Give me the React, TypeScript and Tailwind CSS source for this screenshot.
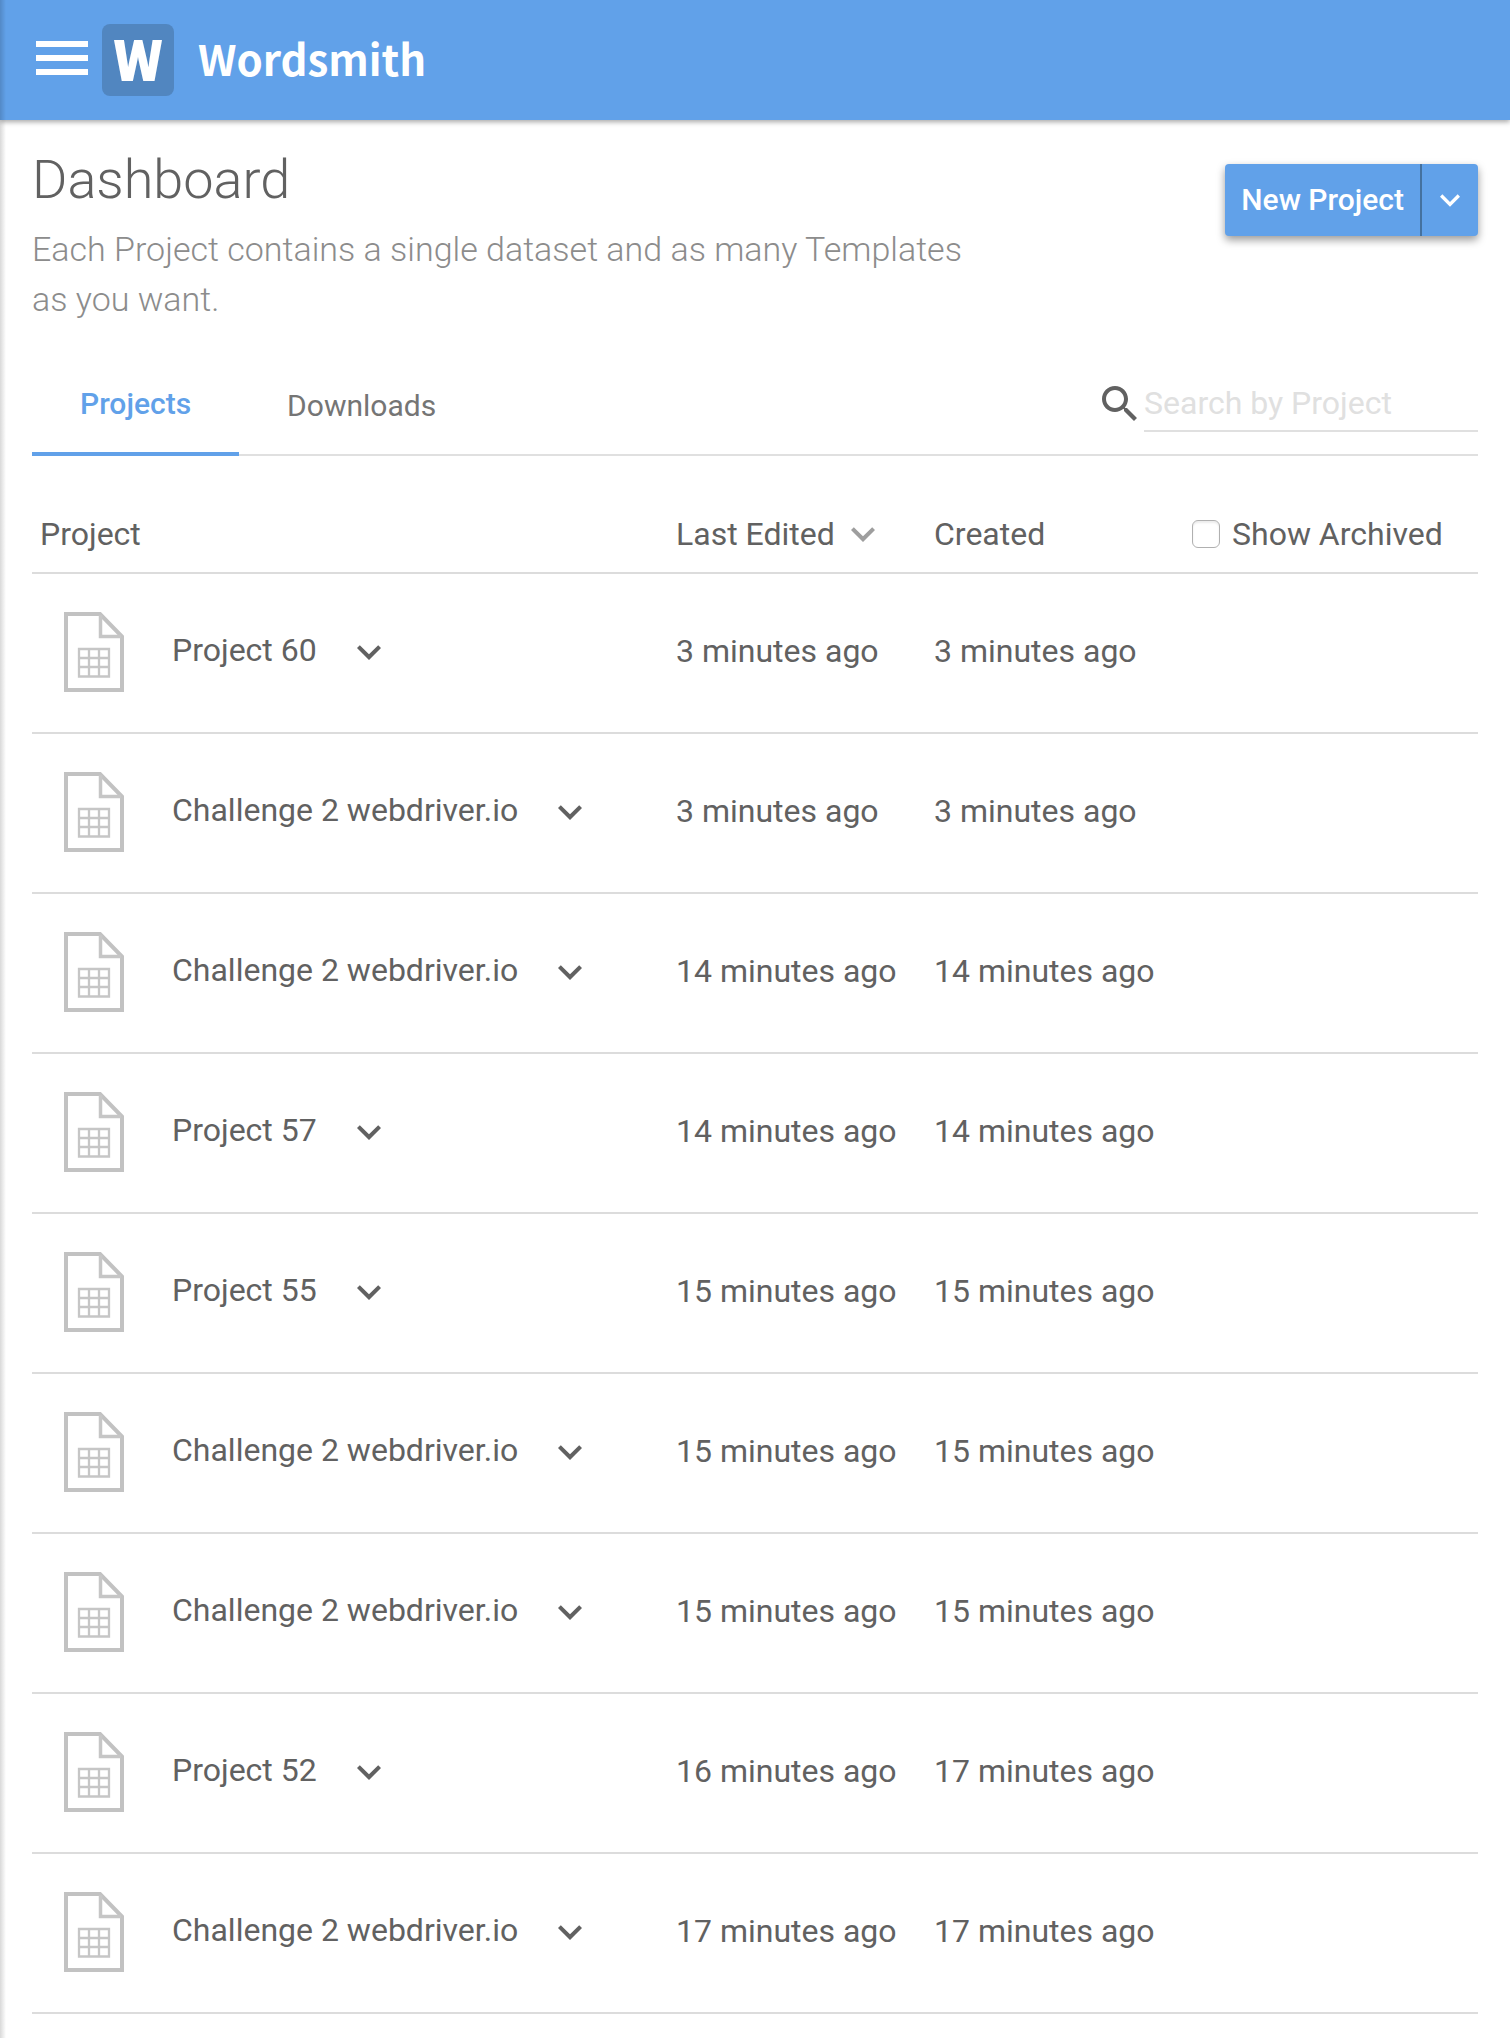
import React from "react";

type Project = { name: string; edited: string; created: string };

const projects: Project[] = [
  { name: "Project 60", edited: "3 minutes ago", created: "3 minutes ago" },
  { name: "Challenge 2 webdriver.io", edited: "3 minutes ago", created: "3 minutes ago" },
  { name: "Challenge 2 webdriver.io", edited: "14 minutes ago", created: "14 minutes ago" },
  { name: "Project 57", edited: "14 minutes ago", created: "14 minutes ago" },
  { name: "Project 55", edited: "15 minutes ago", created: "15 minutes ago" },
  { name: "Challenge 2 webdriver.io", edited: "15 minutes ago", created: "15 minutes ago" },
  { name: "Challenge 2 webdriver.io", edited: "15 minutes ago", created: "15 minutes ago" },
  { name: "Project 52", edited: "16 minutes ago", created: "17 minutes ago" },
  { name: "Challenge 2 webdriver.io", edited: "17 minutes ago", created: "17 minutes ago" },
];

function Chevron({ className }: { className: string }) {
  return (
    <svg viewBox="0 0 24 24" fill="currentColor" className={className} aria-hidden="true">
      <path d="M16.59 8.59 12 13.17 7.41 8.59 6 10l6 6 6-6z" />
    </svg>
  );
}

function SearchIcon() {
  return (
    <svg viewBox="0 0 24 24" fill="currentColor" className="size-12 shrink-0 text-[#616161]" aria-hidden="true">
      <path d="M15.5 14h-.79l-.28-.27C15.41 12.59 16 11.11 16 9.5 16 5.91 13.09 3 9.5 3S3 5.91 3 9.5 5.91 16 9.5 16c1.61 0 3.09-.59 4.23-1.57l.27.28v.79l5 4.99L20.49 19l-4.99-5zm-6 0C7.01 14 5 11.99 5 9.5S7.01 5 9.5 5 14 7.01 14 9.5 11.99 14 9.5 14z" />
    </svg>
  );
}

function SheetIcon() {
  return (
    <svg viewBox="0 0 60 80" fill="none" className="h-20 w-[60px] shrink-0" aria-hidden="true">
      <path d="M2 2H36L58 24.5V78H2Z" stroke="#c2c2c2" strokeWidth="4" />
      <path d="M36.5 3V24.5H57" stroke="#c6c6c6" strokeWidth="3.5" />
      <path d="M15 37H45V64.500H15ZM25 37V65M35 37V65M15 46H45M15 55H45" stroke="#c6c6c6" strokeWidth="2.3" />
    </svg>
  );
}

export default function App() {
  return (
    <div className="relative min-h-screen bg-white font-['Roboto',sans-serif] text-[32px] leading-10 text-[#616161]">
      <header className="flex h-[120px] items-center bg-[#61a1e9] pl-9 text-white shadow-[0_2px_5px_rgba(0,0,0,0.35)]">
        <button type="button" aria-label="Open menu" className="mr-3.5 flex w-[52px] flex-col gap-2 pb-1">
          <span className="h-1.5 w-full bg-white" />
          <span className="h-1.5 w-full bg-white" />
          <span className="h-1.5 w-full bg-white" />
        </button>
        <a href="#" className="flex items-center gap-6 font-['Noto_Sans_CJK_SC',sans-serif] font-bold">
          <span className="flex size-[72px] items-center justify-center rounded-lg bg-[#5186c0] pb-1 text-[52px] leading-[68px] [-webkit-text-stroke:2px_white]">
            W
          </span>
          <span className="pb-1 text-[42px] leading-[68px]">Wordsmith</span>
        </a>
      </header>
      <div className="pointer-events-none absolute inset-y-0 left-0 w-1.5 bg-linear-to-r from-black/15 to-transparent" />

      <main className="px-8 pt-7">
        <section className="flex items-start justify-between">
          <div className="max-w-[964px]">
            <h1 className="text-[54px] leading-[64px] font-light">Dashboard</h1>
            <p className="mt-3 text-[34px] leading-[50px] font-light text-[#8c8c8c]">
              Each Project contains a single dataset and as many Templates as you want.
            </p>
          </div>
          <div className="mt-4 flex h-[72px] rounded bg-[#61a1e9] text-white shadow-[0_4px_8px_rgba(0,0,0,0.4)]">
            <button type="button" className="px-4 text-[30px] font-medium">
              New Project
            </button>
            <button type="button" aria-label="More options" className="flex w-[58px] items-center justify-center border-l-2 border-[#44719f]">
              <Chevron className="size-10" />
            </button>
          </div>
        </section>

        <section className="mt-11 flex items-end justify-between border-b-2 border-[#e0e0e0]">
          <div role="tablist" className="-mb-0.5 flex text-[30px]">
            <button type="button" role="tab" aria-selected="true" className="border-b-4 border-[#61a1e9] px-12 pt-4 pb-7 font-medium text-[#61a1e9]">
              Projects
            </button>
            <button type="button" role="tab" aria-selected="false" className="px-12 pt-4 pb-7 text-[#757575]">
              Downloads
            </button>
          </div>
          <label className="mb-[22px] flex items-center">
            <SearchIcon />
            <input
              type="text"
              aria-label="Search by Project"
              placeholder="Search by Project"
              className="h-14 w-[334px] border-b-2 border-[#e0e0e0] outline-none placeholder:text-[#e0e0e0]"
            />
          </label>
        </section>

        <table className="mt-9 w-full table-fixed border-collapse text-left">
          <thead>
            <tr className="h-[81px] border-b-2 border-[#dcdcdc]">
              <th className="pt-1 pl-2 font-normal">Project</th>
              <th className="w-[258px] pt-1 pl-2 font-normal">
                <button type="button" className="flex items-center gap-1 whitespace-nowrap">
                  Last Edited
                  <Chevron className="-my-1 size-12 text-[#9e9e9e]" />
                </button>
              </th>
              <th className="w-[258px] pt-1 pl-2 font-normal">Created</th>
              <th className="w-[294px] pt-1 pl-2 font-normal">
                <label className="flex items-center gap-3 whitespace-nowrap">
                  <input
                    type="checkbox"
                    className="size-7 appearance-none rounded-md border border-[#b0b0b0] bg-white shadow-[inset_0_2px_2px_rgba(0,0,0,0.08)] checked:bg-[#61a1e9]"
                  />
                  Show Archived
                </label>
              </th>
            </tr>
          </thead>
          <tbody>
            {projects.map((project, index) => (
              <tr key={index} className="h-40 border-b-2 border-[#dcdcdc]">
                <td className="pb-0.5">
                  <div className="flex items-center pl-8">
                    <SheetIcon />
                    <a href="#" className="mr-7 ml-12 pb-1 whitespace-nowrap">{project.name}</a>
                    <button type="button" aria-label={`Actions for ${project.name}`}>
                      <Chevron className="size-12" />
                    </button>
                  </div>
                </td>
                <td className="pb-1 pl-2 whitespace-nowrap">{project.edited}</td>
                <td className="pb-1 pl-2 whitespace-nowrap">{project.created}</td>
                <td />
              </tr>
            ))}
          </tbody>
        </table>
      </main>
    </div>
  );
}
